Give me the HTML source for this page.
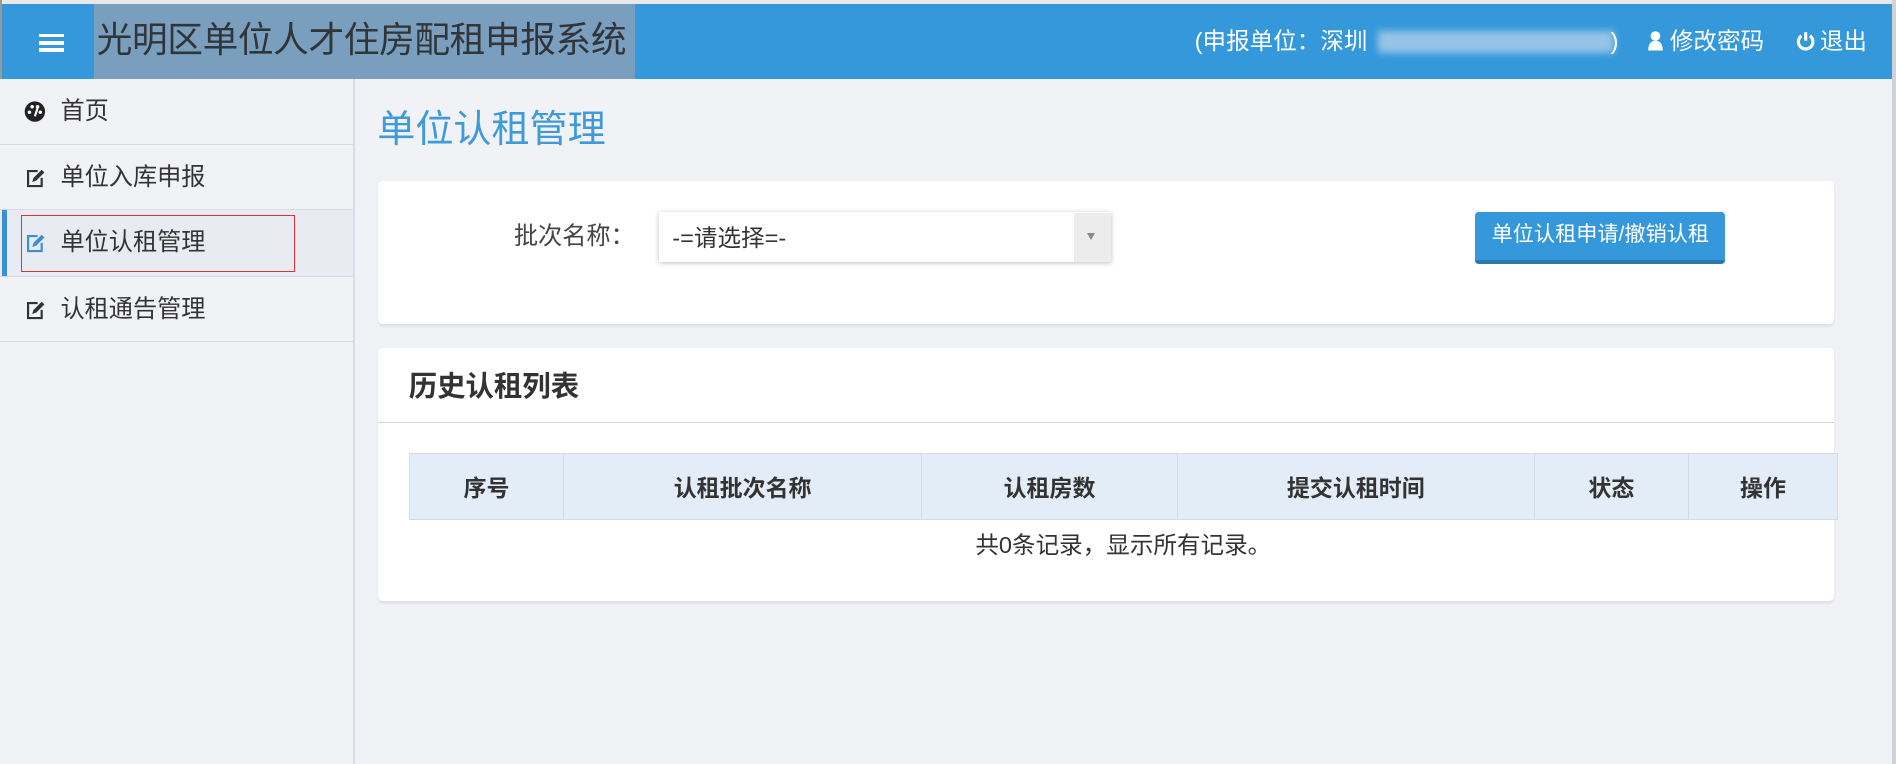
<!DOCTYPE html>
<html><head><meta charset="utf-8"><style>
html,body{margin:0;padding:0;width:1896px;height:764px;overflow:hidden;background:#f0f2f6}
#w{zoom:1.20918;width:1568px;height:632px;position:relative;font-family:"Liberation Sans","Noto Sans CJK SC",sans-serif;background:#f0f2f6;overflow:hidden}
.a{position:absolute}
#top{left:0;top:0;width:1568px;height:3px;background:#e9e9e9}
#hd{left:0;top:3px;width:1568px;height:62px;background:#3498db}
#ttl{left:78px;top:3px;width:447px;height:62px;background:#7a9ebd;color:#2f3538;font-size:29.5px;line-height:60px;padding-left:2px;box-sizing:border-box;white-space:nowrap;letter-spacing:-0.3px}
.hb{left:32px;width:21px;height:3px;background:#fff}
.ht{color:#fff;font-size:19.5px;top:22px;line-height:24px;white-space:nowrap}
#sb{left:0;top:65px;width:292px;height:567px;background:#f1f2f6;border-right:2px solid #dadde3}
.it{left:0;width:292px;height:54px;border-bottom:1px solid #d8dbe0;font-size:20px;color:#333;line-height:54px;box-sizing:border-box;padding-left:50px}
.ic{position:absolute;left:20px;top:18px;width:18px;height:18px}
.card{background:#fff;border-radius:4px;box-shadow:0 2px 2px rgba(0,0,0,.08)}
th{background:#e3edf8;border:1px solid #d3dce6;font-weight:bold;font-size:19px;color:#333;height:53px;padding:0}
table{border-collapse:collapse}
</style></head><body><div id="w">
<div class="a" id="top"></div>
<div class="a" id="hd"></div>
<div class="a" style="left:0;top:0;width:2px;height:632px;background:#9a9a9a"></div>
<div class="a" style="left:1565px;top:0;width:3px;height:632px;background:#cfd3d8"></div>
<div class="a hb" style="top:28px"></div><div class="a hb" style="top:34px"></div><div class="a hb" style="top:40px"></div>
<div class="a" id="ttl">光明区单位人才住房配租申报系统</div>
<div class="a ht" style="left:988px">(申报单位：深圳</div>
<div class="a" style="left:1140px;top:26px;width:195px;height:18px;background:#a9cdeb;filter:blur(3px);opacity:.85"></div>
<div class="a ht" style="left:1332px">)</div>
<svg class="a" style="left:1362px;top:25px" width="14" height="18" viewBox="0 0 14 18"><circle cx="7" cy="5" r="4" fill="#fff"/><path d="M1 17 Q1 9 7 9 Q13 9 13 17 Z" fill="#fff"/></svg>
<div class="a ht" style="left:1381px">修改密码</div>
<svg class="a" style="left:1485px;top:26px" width="16" height="16" viewBox="0 0 16 16"><path d="M4.5 4 A6 6 0 1 0 11.5 4" stroke="#fff" stroke-width="2.6" fill="none"/><line x1="8" y1="1" x2="8" y2="8" stroke="#fff" stroke-width="2.6"/></svg>
<div class="a ht" style="left:1505px">退出</div>

<div class="a" id="sb"></div>
<div class="a it" style="top:65px;height:55px"><svg class="ic" viewBox="0 0 16 16"><circle cx="8" cy="8.5" r="7.5" fill="#222"/><circle cx="4" cy="9" r="1.3" fill="#fff"/><circle cx="6" cy="5" r="1.3" fill="#fff"/><circle cx="10" cy="5" r="1.3" fill="#fff"/><circle cx="12" cy="9" r="1.3" fill="#fff"/><path d="M8 12 L10 6" stroke="#fff" stroke-width="1.6"/></svg>首页</div>
<div class="a it" style="top:120px"><svg class="ic" viewBox="0 0 16 16"><path d="M10 3 H3 V14 H13 V8" stroke="#333" stroke-width="1.6" fill="none"/><path d="M6 11 L7 8 L13 2 L15 4 L9 10 Z" fill="#333"/></svg>单位入库申报</div>
<div class="a it" style="top:174px;height:55px;background:#e8ebf2"><svg class="ic" viewBox="0 0 16 16"><path d="M10 3 H3 V14 H13 V8" stroke="#3a8fd0" stroke-width="1.6" fill="none"/><path d="M6 11 L7 8 L13 2 L15 4 L9 10 Z" fill="#3a8fd0"/></svg>单位认租管理</div>
<div class="a" style="left:2px;top:174px;width:4px;height:54px;background:#3a8fd0"></div>
<div class="a" style="left:17px;top:178px;width:227px;height:47px;border:1px solid #e0303a;box-sizing:border-box"></div>
<div class="a it" style="top:229px"><svg class="ic" viewBox="0 0 16 16"><path d="M10 3 H3 V14 H13 V8" stroke="#333" stroke-width="1.6" fill="none"/><path d="M6 11 L7 8 L13 2 L15 4 L9 10 Z" fill="#333"/></svg>认租通告管理</div>

<div class="a" style="left:312px;top:88px;font-size:31.5px;color:#3e9ad8;line-height:40px">单位认租管理</div>

<div class="a card" style="left:313px;top:150px;width:1204px;height:118px"></div>
<div class="a" style="left:425px;top:183px;font-size:20px;color:#444;line-height:26px">批次名称：</div>
<div class="a" style="left:545px;top:175px;width:374px;height:42px;background:#fff;box-shadow:0 1px 4px rgba(0,0,0,.25)"></div>
<div class="a" style="left:888px;top:176px;width:31px;height:41px;background:#ececec"></div>
<div class="a" style="left:899px;top:193px;width:0;height:0;border-left:4px solid transparent;border-right:4px solid transparent;border-top:6px solid #888"></div>
<div class="a" style="left:556px;top:185px;font-size:19.5px;color:#333;line-height:24px">-=请选择=-</div>
<div class="a" style="left:1220px;top:175px;width:207px;height:43px;background:#3498db;border-bottom:4px solid #2b79b3;border-radius:3px;box-sizing:border-box;color:#fff;font-size:17.5px;text-align:center;line-height:38px;white-space:nowrap">单位认租申请/撤销认租</div>

<div class="a card" style="left:313px;top:288px;width:1204px;height:209px"></div>
<div class="a" style="left:338px;top:304px;font-size:23.5px;font-weight:bold;color:#333;line-height:32px">历史认租列表</div>
<div class="a" style="left:313px;top:349px;width:1204px;height:1px;background:#d7d7d7"></div>
<table class="a" style="left:338px;top:375px;width:1182px"><tr>
<th style="width:127px">序号</th><th style="width:295px">认租批次名称</th><th style="width:211px">认租房数</th><th style="width:294px">提交认租时间</th><th style="width:127px">状态</th><th>操作</th></tr></table>
<div class="a" style="left:338px;top:438px;width:1182px;text-align:center;font-size:19.5px;color:#333;line-height:26px">共0条记录，显示所有记录。</div>
</div></body></html>
